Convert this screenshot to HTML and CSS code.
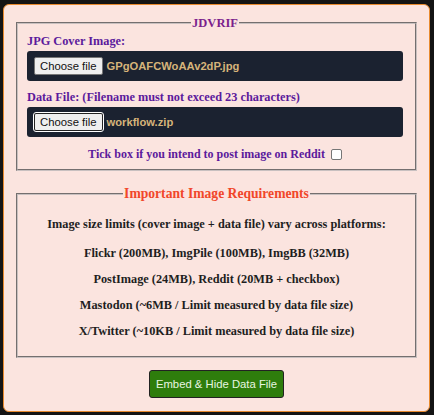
FILE: index.html
```html
<!DOCTYPE html>
<html>
<head>
<meta charset="utf-8">
<link rel="stylesheet" href="styles.css">
</head>
<body>
<div class="card">
  <fieldset class="box main">
    <legend class="title">JDVRIF</legend>
    <label class="label">JPG Cover Image:</label>
    <div class="filebar"><span class="choose">Choose file</span><span class="fname">GPgOAFCWoAAv2dP.jpg</span></div>
    <label class="label">Data File: (Filename must not exceed 23 characters)</label>
    <div class="filebar"><span class="choose focus">Choose file</span><span class="fname">workflow.zip</span></div>
    <div class="tick">Tick box if you intend to post image on Reddit <span class="check"></span></div>
  </fieldset>
  <fieldset class="box req">
    <legend class="reqtitle">Important Image Requirements</legend>
    <p class="line first">Image size limits (cover image + data file) vary across platforms:</p>
    <p class="line">Flickr (200MB), ImgPile (100MB), ImgBB (32MB)</p>
    <p class="line">PostImage (24MB), Reddit (20MB + checkbox)</p>
    <p class="line">Mastodon (~6MB / Limit measured by data file size)</p>
    <p class="line">X/Twitter (~10KB / Limit measured by data file size)</p>
  </fieldset>
  <div class="actions"><button class="embed">Embed &amp; Hide Data File</button></div>
</div>
</body>
</html>
```
FILE: styles.css
```css
html, body { margin: 0; padding: 0; }
body {
  background: #141414;
  padding: 4px 4px 3px 3px;
  font-family: "Liberation Serif", serif;
}
.card {
  background: #fbe4df;
  border: 1px solid #e88a2e;
  border-radius: 6px;
  padding: 11px 12px 0 12px;
  height: 408px;
  box-sizing: border-box;
}
.box {
  margin: 0;
  border: 2px groove #c8c0c0;
  padding: 4px 12px 7px 9px;
}
.title {
  margin: 0 auto;
  padding: 0 1px;
  color: #7b1f8d;
  font-weight: bold;
  font-size: 12.5px;
  line-height: 14px;
}
.label {
  display: block;
  color: #5b1a9c;
  font-weight: bold;
  font-size: 12.3px;
  line-height: 14px;
  margin: 0 0 3px 0;
}
.filebar {
  background: #1b2230;
  border-radius: 3px;
  height: 30px;
  display: flex;
  align-items: center;
  padding: 0 7px;
  margin-bottom: 9px;
}
.main .filebar:last-of-type { height: 31px; }
.choose {
  font-family: "Liberation Sans", Arial, sans-serif;
  font-size: 11.3px;
  color: #111;
  background: #efefef;
  border: 1px solid #767676;
  border-radius: 2px;
  padding: 0 5px;
  line-height: 16px;
  margin-right: 4px;
}
.choose.focus { border-color: #222; outline: 1px solid #fff; }
.fname {
  font-family: "Liberation Sans", Arial, sans-serif;
  font-weight: bold;
  font-size: 11.2px;
  color: #d6b47a;
}
.tick {
  color: #5b1a9c;
  font-weight: bold;
  font-size: 12px;
  line-height: 16px;
  display: flex;
  justify-content: center;
  align-items: center;
  gap: 6px;
}
.check {
  display: inline-block;
  width: 9px; height: 9px;
  border: 1px solid #767676;
  border-radius: 2px;
  background: #fff;
}
.req { margin-top: 15px; padding: 0 10px 12px 10px; }
.reqtitle {
  margin: 0 auto;
  padding: 0 1px;
  color: #f1472a;
  font-weight: bold;
  font-size: 13.6px;
  line-height: 16px;
}
.line {
  margin: 0;
  text-align: center;
  color: #1e1e1e;
  font-weight: bold;
  font-size: 12.3px;
  line-height: 26px;
}
.line.first { margin-top: 9px; margin-bottom: 3px; }
.actions { display: flex; justify-content: center; margin-top: 12px; }
.embed {
  background: #2e7d0c;
  color: #e8f5e0;
  font-family: "Liberation Sans", Arial, sans-serif;
  font-size: 11.3px;
  white-space: nowrap;
  border: 1px solid #222;
  border-radius: 3px;
  padding: 0 6px;
  height: 28px;
}
```
